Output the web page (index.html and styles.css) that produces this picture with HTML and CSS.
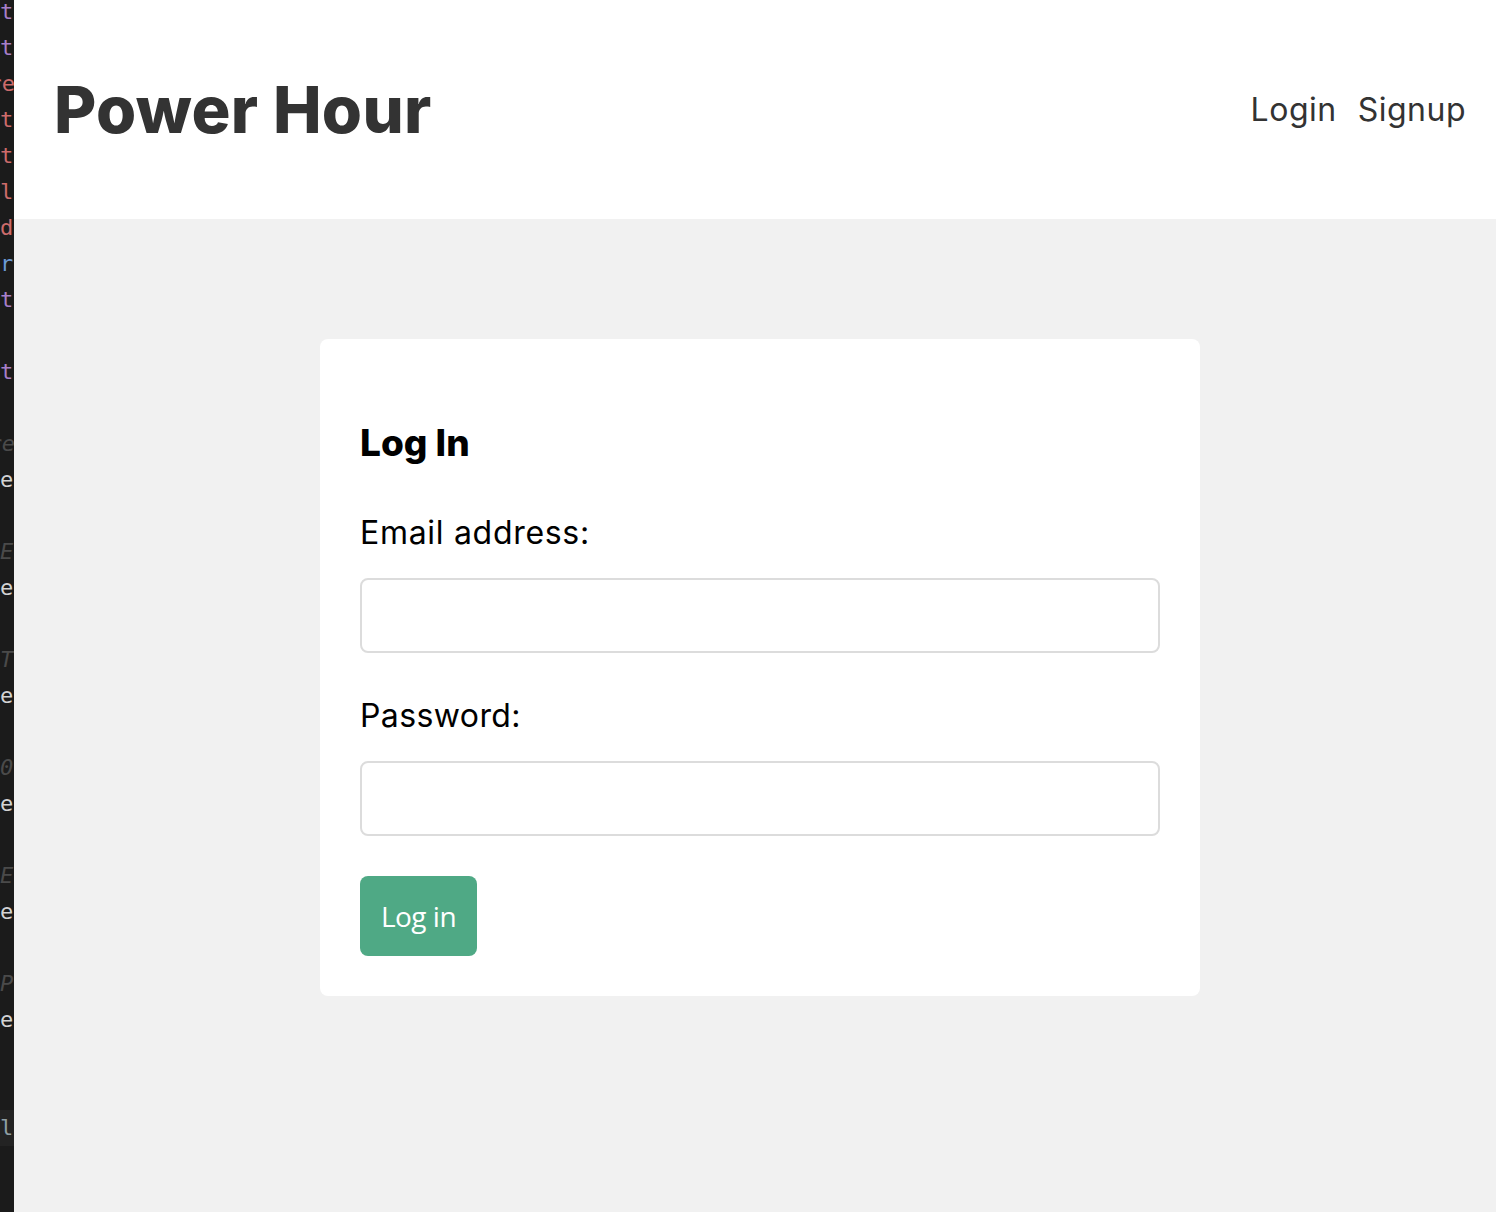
FILE: index.html
```html
<!DOCTYPE html>
<html lang="en">
<head>
<meta charset="utf-8">
<title>Power Hour</title>
<link rel="stylesheet" href="styles.css">
</head>
<body>
<div class="layout">
  <aside class="editor">
    <div class="code-line purple">t</div>
    <div class="code-line purple">t</div>
    <div class="code-line red">re</div>
    <div class="code-line red">t</div>
    <div class="code-line red">t</div>
    <div class="code-line red">l</div>
    <div class="code-line red">d</div>
    <div class="code-line blue">r</div>
    <div class="code-line purple">t</div>
    <div class="code-line"></div>
    <div class="code-line purple">t</div>
    <div class="code-line"></div>
    <div class="code-line comment">re</div>
    <div class="code-line plain">e</div>
    <div class="code-line"></div>
    <div class="code-line comment">E</div>
    <div class="code-line plain">e</div>
    <div class="code-line"></div>
    <div class="code-line comment">T</div>
    <div class="code-line plain">e</div>
    <div class="code-line"></div>
    <div class="code-line comment">0</div>
    <div class="code-line plain">e</div>
    <div class="code-line"></div>
    <div class="code-line comment">E</div>
    <div class="code-line plain">e</div>
    <div class="code-line"></div>
    <div class="code-line comment">P</div>
    <div class="code-line plain">e</div>
    <div class="code-line"></div>
    <div class="code-line"></div>
    <div class="code-line current">l</div>
    <div class="code-line"></div>
    <div class="code-line"></div>
  </aside>
  <div class="page">
    <header class="site-header">
      <h1 class="brand">Power Hour</h1>
      <nav class="nav">
        <a href="#" class="nav-link">Login</a>
        <a href="#" class="nav-link">Signup</a>
      </nav>
    </header>
    <main class="main">
      <section class="card">
        <h2 class="card-title">Log In</h2>
        <form class="form">
          <label class="label label-email" for="email">Email address:</label>
          <input class="input" id="email" type="email">
          <label class="label label-password" for="password">Password:</label>
          <input class="input" id="password" type="password">
          <button class="btn" type="button">Log in</button>
        </form>
      </section>
    </main>
  </div>
</div>
</body>
</html>
```
FILE: styles.css
```css
* { box-sizing: border-box; }
html, body { margin: 0; padding: 0; }
body {
  font-family: "Inter", "Lato", sans-serif;
  background: #f1f1f1;
  color: #000;
}
.layout {
  display: flex;
  min-height: 1212px;
}
.editor {
  width: 14px;
  flex: 0 0 14px;
  background: #1b1b1b;
  overflow: hidden;
}
.code-line {
  height: 36px;
  line-height: 36px;
  font-family: "DejaVu Sans Mono", monospace;
  font-size: 22px;
  white-space: nowrap;
  direction: rtl;
  text-align: left;
  margin-right: -1px;
}
.code-line:first-child { margin-top: -6px; }
.purple { color: #a77fc9; }
.red { color: #cd6b6b; }
.blue { color: #6c9ad6; }
.plain { color: #d4d4d4; }
.comment { color: #4a4a4a; font-style: italic; }
.current { background: #232323; color: #8f9ea3; }
.page {
  flex: 1;
  display: flex;
  flex-direction: column;
}
.site-header {
  height: 219px;
  background: #fff;
  display: flex;
  align-items: center;
  justify-content: space-between;
  padding: 0 30px 0 40px;
}
.brand {
  margin: 0;
  font-size: 65px;
  font-weight: 800;
  letter-spacing: 0.3px;
  color: #333;
}
.nav {
  display: flex;
  gap: 21px;
}
.nav-link {
  font-size: 32px;
  font-weight: 400;
  letter-spacing: 0.5px;
  color: #333;
  text-decoration: none;
}
.main {
  flex: 1;
  padding: 120px 0 0 306px;
}
.card {
  width: 880px;
  background: #fff;
  border-radius: 8px;
  padding: 40px;
}
.card-title {
  margin: 41px 0 0;
  font-size: 37px;
  line-height: 46px;
  font-weight: 800;
  letter-spacing: 0;
}
.form {
  display: flex;
  flex-direction: column;
  align-items: flex-start;
}
.label {
  margin-top: 43px;
  font-size: 32px;
  line-height: 48px;
  font-weight: 400;
  letter-spacing: 0.7px;
}
.label-password { margin-top: 39px; letter-spacing: 0.4px; }
.input {
  margin-top: 21px;
  width: 800px;
  height: 75px;
  border: 2px solid #dcdcdc;
  border-radius: 8px;
  background: #fff;
}
.btn {
  margin-top: 40px;
  width: 117px;
  height: 80px;
  border: none;
  border-radius: 8px;
  background: #4fa985;
  color: #fff;
  font-family: "Open Sans", sans-serif;
  font-size: 28px;
  line-height: 76px;
  letter-spacing: -0.5px;
  padding: 0;
}
```
